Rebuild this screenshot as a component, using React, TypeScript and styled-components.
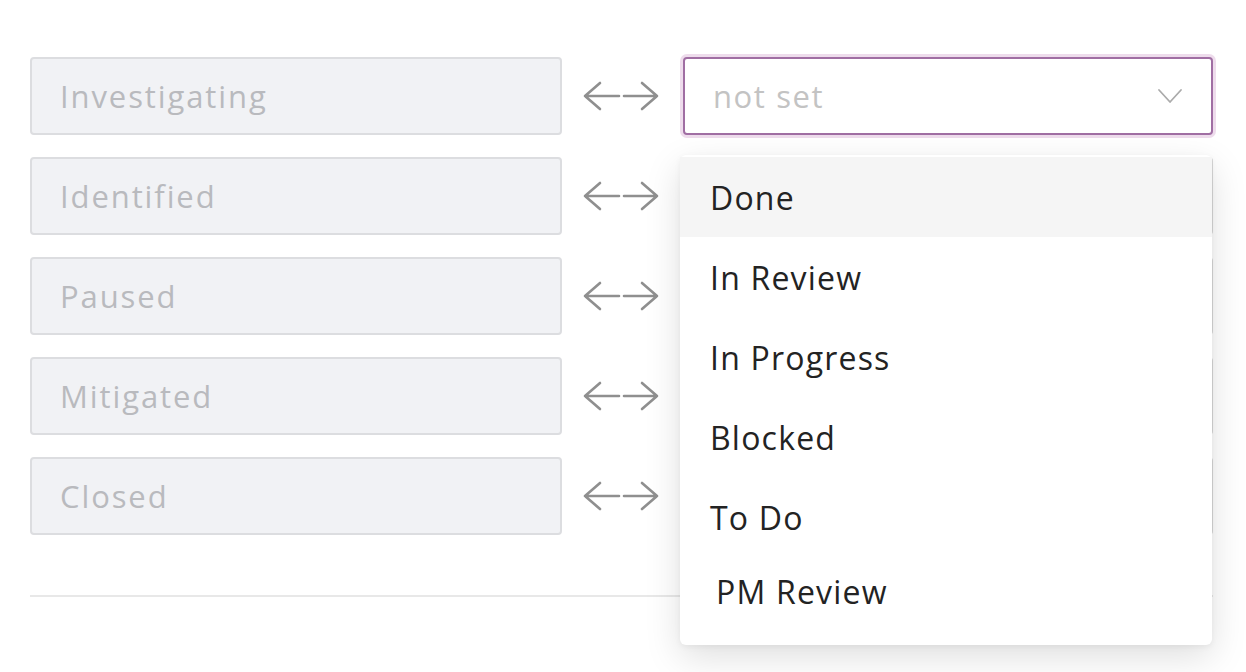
import React from 'react';
import styled, { createGlobalStyle } from 'styled-components';

const GlobalStyle = createGlobalStyle`
  html, body {
    margin: 0;
    padding: 0;
    background: #fff;
    font-family: "Open Sans", Lato, sans-serif;
  }
`

const Page = styled.div`
  width: 1246px;
  height: 672px;
  overflow: hidden;
  padding: 57px 0 0 30px;
  box-sizing: border-box;
`

const Mapping = styled.div`
  position: relative;
  width: 1183px;
`

const Rows = styled.div`
  display: flex;
  flex-direction: column;
  gap: 22px;
`

const Row = styled.div`
  display: grid;
  grid-template-columns: 532px 1fr 530px;
  align-items: center;
  height: 78px;
`

const SourceField = styled.div`
  height: 78px;
  box-sizing: border-box;
  display: flex;
  align-items: center;
  padding: 0 28px;
  background: #f1f2f5;
  border: 2px solid #dcdde0;
  border-radius: 4px;
  color: #b9babe;
  font-size: 31px;
  letter-spacing: 1.9px;
`

const Arrows = styled.div`
  display: flex;
  justify-content: center;
  padding-right: 4px;
`

const Select = styled.div<{ $open?: boolean }>`
  height: 78px;
  box-sizing: border-box;
  display: flex;
  align-items: center;
  justify-content: space-between;
  padding: 0 28px;
  background: #fff;
  border: 2px solid ${p => (p.$open ? '#a06ea3' : '#d9d9d9')};
  border-radius: 4px;
  box-shadow: ${p => (p.$open ? '0 0 0 3px #eedcec' : 'none')};
  color: #c3c3c3;
  font-size: 31px;
  letter-spacing: 1.6px;
`

const Divider = styled.hr`
  margin: 60px 0 0;
  border: none;
  height: 2px;
  background: #e8e8e8;
`

const Menu = styled.ul`
  position: absolute;
  top: 98px;
  left: 650px;
  width: 532px;
  margin: 0;
  padding: 2px 0 20px;
  list-style: none;
  background: #fff;
  border-radius: 6px;
  box-shadow: 0 12px 36px rgba(0, 0, 0, 0.13), 0 2px 6px rgba(0, 0, 0, 0.05);
  z-index: 10;
`

const Option = styled.li<{ $active?: boolean; $last?: boolean }>`
  height: ${p => (p.$last ? '68px' : '80px')};
  display: flex;
  align-items: center;
  padding-left: ${p => (p.$last ? '36px' : '30px')};
  background: ${p => (p.$active ? '#f5f5f5' : '#fff')};
  color: #232323;
  font-size: 32px;
  letter-spacing: 1.2px;
`

const ArrowIcon = () => (
  <svg width="76" height="32" viewBox="0 0 76 32" fill="none" stroke="#8f8f8f" strokeWidth="2.6" strokeLinecap="round" strokeLinejoin="round">
    <path d="M2 16h34M17 3L2 16l15 13" />
    <path d="M41 16h33M59 3l15 13-15 13" />
  </svg>
)

const Chevron = () => (
  <svg width="26" height="16" viewBox="0 0 26 16" fill="none" stroke="#ababab" strokeWidth="1.8" strokeLinecap="round" strokeLinejoin="round">
    <path d="M2 2l11 12L24 2" />
  </svg>
)

const statuses = ['Investigating', 'Identified', 'Paused', 'Mitigated', 'Closed']
const options = ['Done', 'In Review', 'In Progress', 'Blocked', 'To Do', 'PM Review']

export default function App() {
  return (
    <Page>
      <GlobalStyle />
      <Mapping>
        <Rows>
          {statuses.map((s, i) => (
            <Row key={s}>
              <SourceField>{s}</SourceField>
              <Arrows><ArrowIcon /></Arrows>
              <Select $open={i === 0}>
                <span>not set</span>
                <Chevron />
              </Select>
            </Row>
          ))}
        </Rows>
        <Divider />
        <Menu>
          {options.map((o, i) => (
            <Option key={o} $active={i === 0} $last={i === options.length - 1}>{o}</Option>
          ))}
        </Menu>
      </Mapping>
    </Page>
  )
}
